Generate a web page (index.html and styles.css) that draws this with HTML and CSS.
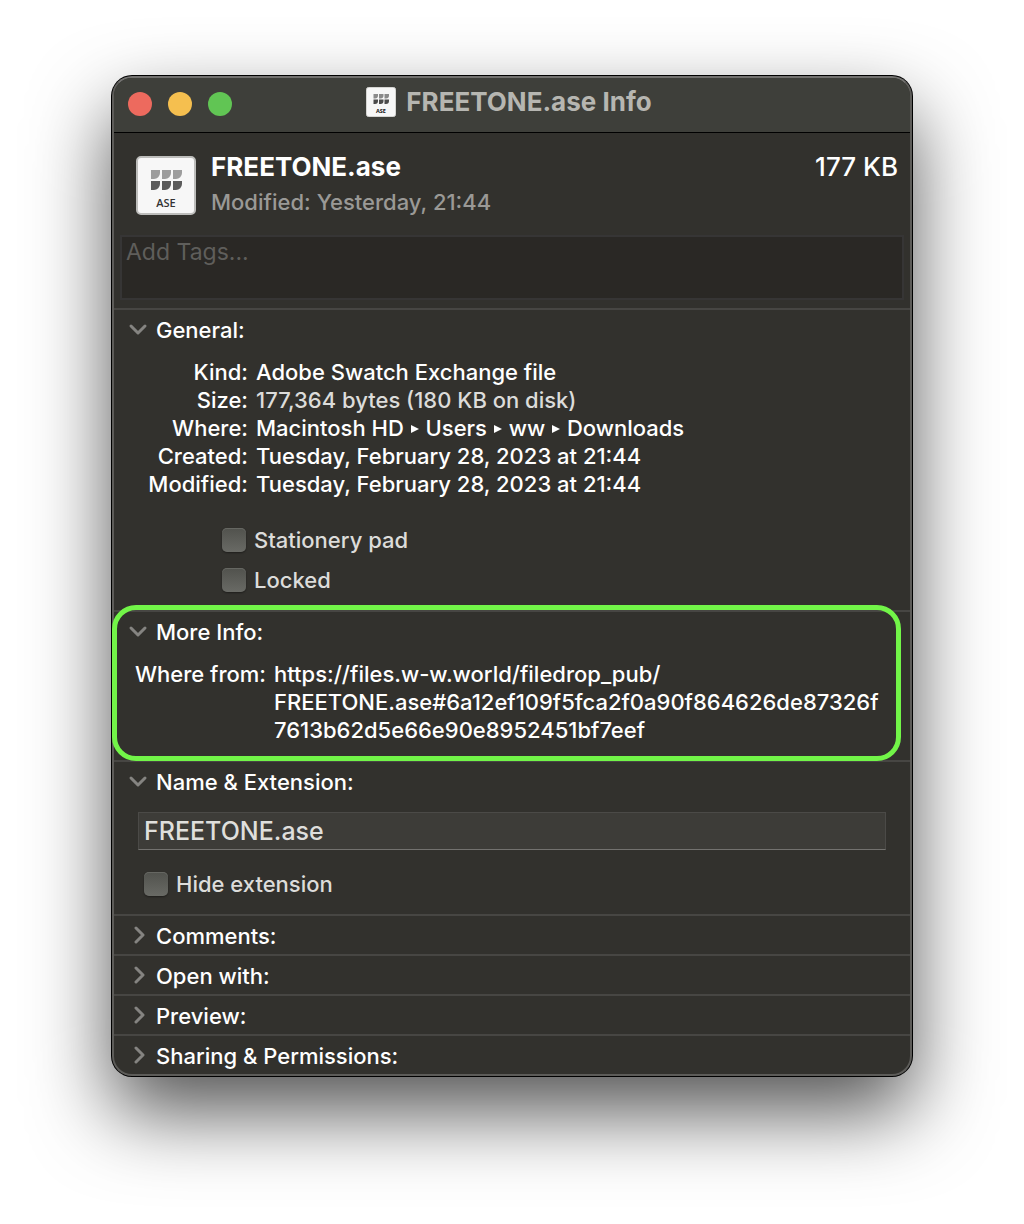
FILE: index.html
```html
<!DOCTYPE html>
<html lang="en">

<head>
  <meta charset="UTF-8" />
  <meta name="viewport" content="width=device-width, initial-scale=1.0" />
  <title>FREETONE.ase Info</title>
  <link rel="stylesheet" href="styles.css">
</head>

<body>
  <main>
    <div class="window">
      <div class="titlebar">
        <div class="lights">
          <button type="button" class="close" aria-label="Close"></button>
          <button type="button" class="minimize" aria-label="Minimize"></button>
          <button type="button" class="maximize" aria-label="Zoom"></button>
        </div>
        <div class="title">
          <svg class="icon-small" viewBox="0 0 60 60">
            <rect x="1" y="1" width="58" height="58" rx="4" fill="#f7f7f7" stroke="#d5d5d2" stroke-width="2" />
            <path fill="#8a8a8a" d="M15 14h9v3a6 6 0 0 1-6 6h-3zM26 14h9v3a6 6 0 0 1-6 6h-3zM37 14h9v3a6 6 0 0 1-6 6h-3z" />
            <path fill="#4b4b4b" d="M15 25h9v3a6 6 0 0 1-6 6h-3zM26 25h9v3a6 6 0 0 1-6 6h-3zM37 25h9v3a6 6 0 0 1-6 6h-3z" />
            <text x="30" y="51" text-anchor="middle">ASE</text>
          </svg>
          <span>FREETONE.ase Info</span>
        </div>
      </div>

      <header>
        <svg class="icon" viewBox="0 0 60 60">
          <rect x="1" y="1" width="58" height="57" rx="4" fill="#f7f7f7" stroke="#bdbdbb" stroke-width="2" />
          <path fill="#9d9d9d" d="M15 14h9v3a6 6 0 0 1-6 6h-3zM26 14h9v3a6 6 0 0 1-6 6h-3zM37 14h9v3a6 6 0 0 1-6 6h-3z" />
          <path fill="#5b5b5b" d="M15 25h9v3a6 6 0 0 1-6 6h-3zM26 25h9v3a6 6 0 0 1-6 6h-3zM37 25h9v3a6 6 0 0 1-6 6h-3z" />
          <text x="30" y="51" text-anchor="middle">ASE</text>
        </svg>
        <div class="file">
          <h1>FREETONE.ase</h1>
          <p><span>Modified:</span><span>Yesterday, 21:44</span></p>
        </div>
        <div class="size">177 KB</div>
      </header>
      <textarea class="tags" placeholder="Add Tags..." aria-label="Tags"></textarea>

      <details open>
        <summary><svg viewBox="0 0 20 20"><path d="M3 6l7 7 7-7" /></svg>General:</summary>
        <dl>
          <dt>Kind:</dt>
          <dd>Adobe Swatch Exchange file</dd>
          <dt>Size:</dt>
          <dd class="dim">177,364 bytes (180 KB on disk)</dd>
          <dt>Where:</dt>
          <dd class="path">Macintosh HD <i></i> Users <i></i> ww <i></i> Downloads</dd>
          <dt>Created:</dt>
          <dd>Tuesday, February 28, 2023 at 21:44</dd>
          <dt>Modified:</dt>
          <dd>Tuesday, February 28, 2023 at 21:44</dd>
        </dl>
        <div class="checks">
          <label><input type="checkbox">Stationery pad</label>
          <label><input type="checkbox">Locked</label>
        </div>
      </details>

      <details open class="highlight">
        <summary><svg viewBox="0 0 20 20"><path d="M3 6l7 7 7-7" /></svg>More Info:</summary>
        <dl class="more">
          <dt>Where from:</dt>
          <dd>https://files.w-w.world/filedrop_pub/<br>FREETONE.ase#6a12ef109f5fca2f0a90f864626de87326f<br>7613b62d5e66e90e8952451bf7eef</dd>
        </dl>
      </details>

      <details open>
        <summary><svg viewBox="0 0 20 20"><path d="M3 6l7 7 7-7" /></svg>Name &amp; Extension:</summary>
        <div class="name">
          <input type="text" value="FREETONE.ase" aria-label="Name &amp; Extension">
          <label><input type="checkbox">Hide extension</label>
        </div>
      </details>

      <details>
        <summary><svg viewBox="0 0 20 20"><path d="M8 2l7 7-7 7" /></svg>Comments:</summary>
      </details>
      <details>
        <summary><svg viewBox="0 0 20 20"><path d="M8 2l7 7-7 7" /></svg>Open with:</summary>
      </details>
      <details>
        <summary><svg viewBox="0 0 20 20"><path d="M8 2l7 7-7 7" /></svg>Preview:</summary>
      </details>
      <details>
        <summary><svg viewBox="0 0 20 20"><path d="M8 2l7 7-7 7" /></svg>Sharing &amp; Permissions:</summary>
      </details>
    </div>
  </main>
</body>

</html>
```

FILE: styles.css
```css
* {
  box-sizing: border-box;
}

body {
  margin: 0;
  background: #fff;
  color: #fff;
  font-family: Inter, "Liberation Sans", sans-serif;
  font-size: 22px;
  font-weight: 500;
  line-height: 28px;
}

main {
  padding: 76px 112px 148px;
}

.window {
  background: #32312d;
  border: 2px solid #5d5c59;
  border-top-color: #72716f;
  border-radius: 20px;
  box-shadow: 0 0 0 1px #000, 0 36px 80px rgba(0, 0, 0, 0.68);
}

.titlebar {
  display: grid;
  grid-template-columns: 1fr auto 1fr;
  align-items: center;
  height: 55px;
  padding: 0 20px 2px 14px;
  background: #3e3f3a;
  border-bottom: 1px solid #000;
  border-radius: 18px 18px 0 0;
}

.lights {
  display: flex;
  gap: 16px;
}

.lights button {
  width: 24px;
  height: 24px;
  padding: 0;
  border: 0;
  border-radius: 50%;
}

.close {
  background: #ed6a5e;
}

.minimize {
  background: #f5bf4f;
}

.maximize {
  background: #61c554;
}

.title {
  display: flex;
  align-items: center;
  gap: 10px;
  padding-bottom: 4px;
  color: #b6b6b1;
  font-size: 26px;
  font-weight: 700;
}

.icon-small {
  width: 30px;
  height: 30px;
}

.icon text,
.icon-small text {
  fill: #333;
  font-family: "Open Sans", sans-serif;
  font-size: 11px;
  font-weight: 600;
}

.icon-small text {
  fill: #111;
  font-weight: 700;
}

header {
  display: flex;
  padding: 20px 12px 19px 22px;
}

.icon {
  flex: none;
  width: 60px;
  height: 60px;
  margin-top: 3px;
}

.file {
  flex: 1;
  margin-left: 15px;
}

h1 {
  margin: 0;
  font-size: 26px;
  font-weight: 700;
  line-height: 28px;
}

.file p {
  display: flex;
  gap: 6px;
  margin: 7px 0 0;
  color: #9a9996;
}

.size {
  font-size: 26px;
}

.tags {
  display: block;
  width: calc(100% - 12px);
  height: 65px;
  margin: 0 6px 8px;
  padding: 1px 4px;
  background: #2a2825;
  border: 2px solid #363535;
  color: #fff;
  font: 400 23px/28px Inter, "Liberation Sans", sans-serif;
  resize: none;
}

.tags::placeholder {
  color: #5f5e5b;
}

details {
  position: relative;
  border-top: 2px solid #474643;
}

summary {
  display: flex;
  align-items: center;
  gap: 8px;
  height: 38px;
  padding: 2px 14px 0;
  list-style: none;
}

summary svg {
  width: 20px;
  height: 20px;
  fill: none;
  stroke: #858481;
  stroke-width: 3;
  stroke-linecap: round;
  stroke-linejoin: round;
}

dl {
  display: grid;
  grid-template-columns: 134px 1fr;
  column-gap: 8px;
  margin: 0;
  padding: 10px 0 0;
}

dt {
  text-align: right;
}

dd {
  margin: 0;
}

.more {
  grid-template-columns: 152px 1fr;
  padding-bottom: 16px;
}

.dim,
label {
  color: #dcdcda;
}

.path i {
  display: inline-block;
  margin: 0 1px 3px;
  border: solid transparent;
  border-width: 4px 0 4px 8px;
  border-left-color: #fff;
}

.highlight::after {
  content: "";
  position: absolute;
  z-index: 1;
  top: -7px;
  right: 9px;
  bottom: -1px;
  left: -2px;
  border: 5px solid #72f548;
  border-radius: 24px;
  pointer-events: none;
}

label {
  display: flex;
  align-items: center;
  gap: 8px;
  height: 40px;
}

.checks {
  padding: 22px 0 10px 108px;
}

.name {
  padding: 12px 24px 10px;
}

.name label {
  margin-top: 14px;
  padding-left: 6px;
}

input[type="checkbox"] {
  appearance: none;
  width: 24px;
  height: 24px;
  margin: 0;
  background: linear-gradient(#51524d, #696a65);
  border-radius: 5px;
  box-shadow: inset 0 1px #666762, 0 1px 2px rgba(0, 0, 0, 0.4);
}

input[type="text"] {
  display: block;
  width: 100%;
  height: 38px;
  padding: 0 5px;
  background: #3d3c38;
  border: 1px solid #4b4a47;
  border-bottom-color: #73726f;
  color: #dfdfdc;
  font: 500 25px/28px Inter, "Liberation Sans", sans-serif;
}
```
